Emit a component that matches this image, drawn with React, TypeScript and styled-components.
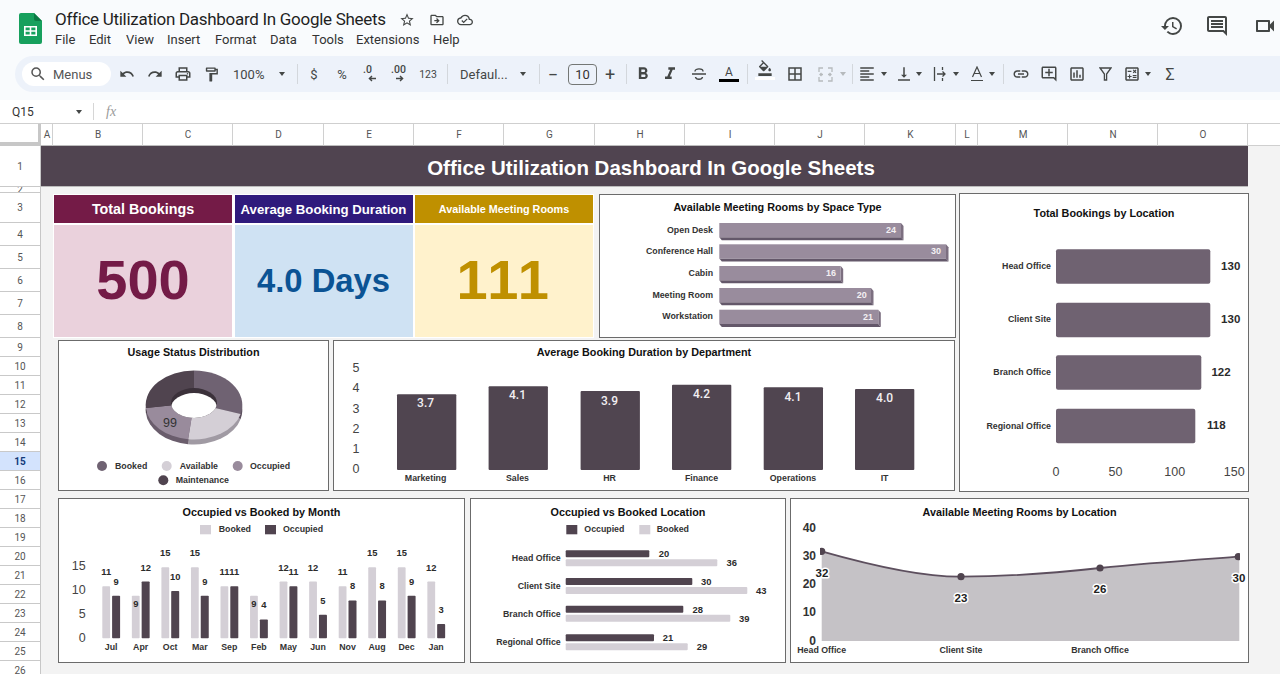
import React from "react";
import styled, { createGlobalStyle } from "styled-components";
import {
  MdBorderAll, MdFormatAlignLeft, MdFormatBold, MdFormatItalic, MdHistory, MdLink,
  MdOutlineAddComment, MdOutlineAssessment, MdOutlineCalculate, MdOutlineCloudDone,
  MdOutlineDriveFileMove, MdOutlineFormatColorFill, MdOutlineFormatPaint, MdOutlineInsertComment,
  MdOutlinePrint, MdOutlineStarBorder, MdOutlineVideocam, MdRedo, MdSearch, MdUndo, MdVerticalAlignBottom,
} from "react-icons/md";

const GlobalStyle = createGlobalStyle`
  html, body { margin: 0; padding: 0; background: #f3f3f3; }
  #root { width: 1280px; height: 674px; overflow: hidden; }
  * { box-sizing: border-box; }
`;

const UI_FONT = `Roboto, "Liberation Sans", sans-serif`;
const CHART_FONT = `"Liberation Sans", Arial, sans-serif`;

const Page = styled.div`
  width: 1280px; height: 674px; overflow: hidden; display: flex; flex-direction: column;
  font-family: ${UI_FONT}; background: #f3f3f3;
`;
const Chrome = styled.header`
  height: 100px; background: #f9fbfd; display: flex; flex-direction: column; flex: none;
`;
const AppBar = styled.div`
  height: 56px; display: flex; align-items: flex-start; padding: 13px 0 0 19px; position: relative;
`;
const LogoBox = styled.svg`
  width: 23px; height: 31px; flex: none;
`;
const TitleColumn = styled.div`
  margin-left: 13px; display: flex; flex-direction: column;
`;
const TitleRow = styled.div`
  height: 13px; display: flex; align-items: center; margin-top: 0;
`;
const DocTitle = styled.div`
  font-size: 17px; letter-spacing: -0.29px; line-height: 13px; color: #1f1f1f; width: 340px; white-space: nowrap;
`;
const TitleIcon = styled.span<{ $w: number }>`
  width: ${(p) => p.$w}px; display: flex; justify-content: center; color: #444746; font-size: 16px;
`;
const MenuRow = styled.nav`
  display: flex; margin-top: 4px; height: 18px; align-items: center;
`;
const MenuItem = styled.span<{ $w: number }>`
  width: ${(p) => p.$w}px; font-size: 13px; color: #333; white-space: nowrap;
`;
const RightIcons = styled.div`
  margin-left: auto; margin-right: -11px; display: flex; height: 26px; color: #444746; font-size: 24px; flex: none;
`;
const RightIcon = styled.span<{ $w: number }>`
  width: ${(p) => p.$w}px; display: flex; justify-content: center; align-items: center; flex: none;
`;
const Toolbar = styled.div`
  height: 36px; margin-left: 15px; background: #edf2fa; border-radius: 18px 0 0 18px;
  display: flex; align-items: center; padding-left: 7px; color: #444746; white-space: nowrap;
`;
const SearchPill = styled.div`
  width: 89px; height: 24px; background: #fff; border-radius: 12px; display: flex; align-items: center;
  padding-left: 7px; font-size: 13px; color: #555; gap: 6px; flex: none; margin-right: 2px;
`;
const Tool = styled.span<{ $w: number; $ml?: number; $muted?: boolean; $size?: number }>`
  width: ${(p) => p.$w}px; margin-left: ${(p) => p.$ml ?? 0}px; flex: none; height: 24px;
  display: flex; align-items: center; justify-content: center; font-size: ${(p) => p.$size ?? 18}px;
  color: ${(p) => (p.$muted ? "#b6babd" : "#444746")};
`;
const TextTool = styled(Tool)`
  font-size: ${(p) => p.$size ?? 13}px;
`;
const Caret = styled.i<{ $muted?: boolean }>`
  width: 0; height: 0; border-left: 3.5px solid transparent; border-right: 3.5px solid transparent;
  border-top: 4px solid ${(p) => (p.$muted ? "#b6babd" : "#444746")}; display: block;
`;
const ToolSep = styled.span<{ $ml?: number }>`
  width: 1px; height: 20px; background: #d3d7dc; margin-left: ${(p) => p.$ml ?? 0}px; flex: none;
`;
const DropTool = styled.span<{ $w: number; $pl: number; $pr: number }>`
  width: ${(p) => p.$w}px; padding: 0 ${(p) => p.$pr}px 0 ${(p) => p.$pl}px; display: flex; align-items: center;
  justify-content: space-between; font-size: 13px; flex: none; color: #444746;
`;
const SizeBox = styled.span`
  width: 29px; height: 21px; margin-left: 2px; border: 1px solid #747775; border-radius: 4px; flex: none;
  display: flex; align-items: center; justify-content: center; font-size: 13px; color: #333;
`;
const ColorA = styled.span`
  display: flex; flex-direction: column; align-items: center; width: 20px; font-size: 12px; line-height: 12px;
  color: #444746;
`;
const ColorBar = styled.span<{ $c: string }>`
  display: block; width: 20px; height: 3px; background: ${(p) => p.$c}; margin-top: 1px;
`;
const FillStack = styled.span`
  display: flex; flex-direction: column; align-items: center; font-size: 16px; height: 24px; margin-top: -4px;
`;
const FormulaBar = styled.div`
  height: 24px; background: #fff; display: flex; align-items: center; flex: none; padding-left: 12px;
  border-bottom: 1px solid #cfcfcf;
`;
const NameBox = styled.span`
  width: 64px; font-size: 12px; color: #333;
`;
const FxSep = styled.span`
  width: 1px; height: 17px; background: #d6d6d6; margin-left: 11px;
`;
const Fx = styled.span`
  font-family: "Liberation Serif", serif; font-style: italic; font-size: 14px; color: #9a9a9a; margin-left: 12px;
`;
const Sheet = styled.div`
  flex: 1; display: flex; flex-direction: column; min-height: 0;
`;
const ColHeaderRow = styled.div`
  display: flex; height: 22px; flex: none; background: #fff;
`;
const Corner = styled.div`
  width: 41px; flex: none; background: #fff; border-right: 3px solid #c7c7c7; border-bottom: 4px solid #c7c7c7;
`;
const ColHead = styled.div<{ $w: number }>`
  width: ${(p) => p.$w}px; flex: none; border-right: 1px solid #d0d0d0; border-bottom: 1px solid #bdbdbd;
  display: flex; align-items: center; justify-content: center; font-size: 10px; color: #555; padding-left: 1px;
`;
const ColFill = styled.div`
  flex: 1; border-bottom: 1px solid #cfcfcf;
`;
const SheetBody = styled.div`
  flex: 1; display: flex; min-height: 0;
`;
const RowHeads = styled.div`
  width: 41px; flex: none; background: #fff; border-right: 1px solid #c7c7c7; overflow: hidden;
`;
const RowHead = styled.div<{ $h: number; $active?: boolean }>`
  height: ${(p) => p.$h}px; overflow: hidden; display: flex; align-items: center; justify-content: center;
  font-size: 10px; border-bottom: 1px solid #c9c9c9;
  color: ${(p) => (p.$active ? "#123a7a" : "#555")};
  font-weight: ${(p) => (p.$active ? 700 : 400)};
  background: ${(p) => (p.$active ? "#d3e3fd" : "#fff")};
`;
const Canvas = styled.main`
  flex: 1; display: flex; flex-direction: column; background: #f3f3f3; font-family: ${CHART_FONT}; min-width: 0;
`;
const Banner = styled.div`
  width: 1207px; height: 41px; flex: none; background: #504450; color: #fff; font-weight: 700; font-size: 20.5px;
  display: flex; align-items: center; justify-content: center; padding: 3px 0 0 13px;
  border-bottom: 1px solid #bbb;
`;
const Upper = styled.section`
  display: flex; padding: 6px 0 0 12px; gap: 3px; flex: none;
`;
const LeftCol = styled.div`
  width: 903px; padding-top: 1px; display: flex; flex-direction: column; gap: 2px;
`;
const TopRow = styled.div`
  display: flex; gap: 5px; height: 144px;
`;
const MiddleRow = styled.div`
  display: flex; gap: 4px; height: 151px; padding-left: 5px;
`;
const Lower = styled.section`
  display: flex; gap: 4px; padding: 6px 0 0 17px; flex: none;
`;
const KpiGrid = styled.div`
  width: 541px; height: 144px; background: #fff; padding: 1px;
  display: grid; grid-template-columns: repeat(3, 178px); grid-template-rows: 28px 112px; gap: 2px 2.5px;
`;
const KpiHead = styled.div<{ $bg: string; $size: number }>`
  background: ${(p) => p.$bg}; color: #fff; font-weight: 700; font-size: ${(p) => p.$size}px;
  display: flex; align-items: center; justify-content: center; white-space: nowrap;
`;
const KpiValue = styled.div<{ $bg: string; $c: string; $size: number; $pb?: number; $ls?: number }>`
  background: ${(p) => p.$bg}; color: ${(p) => p.$c}; font-weight: 700; font-size: ${(p) => p.$size}px;
  padding-bottom: ${(p) => p.$pb ?? 0}px; letter-spacing: ${(p) => p.$ls ?? 0}px;
  display: flex; align-items: center; justify-content: center; white-space: nowrap;
`;
const Card = styled.article<{ $w: number; $h: number; $ml?: number }>`
  width: ${(p) => p.$w}px; height: ${(p) => p.$h}px; background: #fff; border: 1px solid #6b6b6b;
  margin-left: ${(p) => p.$ml ?? 0}px; display: flex; flex-direction: column; flex: none;
`;
const CardTitle = styled.h3<{ $h: number; $pt: number }>`
  height: ${(p) => p.$h}px; padding-top: ${(p) => p.$pt}px; margin: 0; flex: none; font-size: 10.8px; font-weight: 700; color: #111;
  display: flex; align-items: center; justify-content: center; white-space: nowrap;
`;
const Plot = styled.svg`
  display: block; flex: none;
`;
const ChartText = styled.text`
  font-family: ${CHART_FONT}; dominant-baseline: central;
`;
const CatLabel = styled(ChartText)`
  font-size: 8.8px; font-weight: 700; fill: #333;
`;
const AxisLabel = styled(ChartText)`
  font-size: 12.5px; fill: #444;
`;
const BoldAxis = styled(ChartText)`
  font-size: 12px; font-weight: 700; fill: #333;
`;
const ValueLabel = styled(ChartText)<{ $size?: number; $c?: string }>`
  font-size: ${(p) => p.$size ?? 9.4}px; font-weight: 700; fill: ${(p) => p.$c ?? "#2b2b2b"};
`;
const LightValue = styled(ChartText)`
  font-family: Roboto, sans-serif; font-size: 12px; font-weight: 500; fill: #f2eff2;
`;
const HaloLabel = styled(ChartText)`
  font-size: 11.5px; font-weight: 700; fill: #222; stroke: #fff; stroke-width: 3px; paint-order: stroke; stroke-linejoin: round;
`;
const SliceLabel = styled(ChartText)`
  font-size: 12.5px; fill: #333;
`;

function ChartCard(props: { x: number; y: number; w: number; h: number; titleH: number; titlePad?: number; ml?: number; title: string; children: React.ReactNode }) {
  const { x, y, w, h, titleH, titlePad = 0, ml, title, children } = props;
  const iw = w - 2;
  const ih = h - 2 - titleH;
  return (
    <Card $w={w} $h={h} $ml={ml}>
      <CardTitle $h={titleH} $pt={titlePad}>{title}</CardTitle>
      <Plot width={iw} height={ih} viewBox={`${x + 1} ${y + 1 + titleH} ${iw} ${ih}`}>{children}</Plot>
    </Card>
  );
}

const COLS: [string, number][] = [["A", 12], ["B", 90], ["C", 90], ["D", 91], ["E", 90], ["F", 90], ["G", 91], ["H", 90], ["I", 90], ["J", 90], ["K", 91], ["L", 22], ["M", 90], ["N", 90], ["O", 90]];
const ROWS: [string, number][] = [["1", 41], ["2", 6], ["3", 30], ["4", 23], ["5", 23], ["6", 23], ["7", 23], ["8", 23], ...Array.from({ length: 18 }, (_, i): [string, number] => [String(i + 9), 19])];

const SPACE = [
  { n: "Open Desk", y: 223, end: 901, v: 24, vx: 896 },
  { n: "Conference Hall", y: 244.3, end: 946, v: 30, vx: 941 },
  { n: "Cabin", y: 266, end: 840.7, v: 16, vx: 836 },
  { n: "Meeting Room", y: 288, end: 871, v: 20, vx: 866.7 },
  { n: "Workstation", y: 309.7, end: 878.3, v: 21, vx: 873 },
];
const DEPTS = [
  { n: "Marketing", x: 397, top: 394.3, v: "3.7", ly: 403, c: 425.6 },
  { n: "Sales", x: 488.6, top: 386.3, v: "4.1", ly: 395, c: 517.5 },
  { n: "HR", x: 580.6, top: 391, v: "3.9", ly: 400.7, c: 609.5 },
  { n: "Finance", x: 672, top: 384.7, v: "4.2", ly: 394.3, c: 701.5 },
  { n: "Operations", x: 763.7, top: 387.3, v: "4.1", ly: 396.7, c: 793 },
  { n: "IT", x: 855, top: 389, v: "4.0", ly: 398.3, c: 884.6 },
];
const TOTALS = [
  { n: "Head Office", y: 249.3, end: 1210.3, v: 130, vx: 1230.7, c: 266 },
  { n: "Client Site", y: 302.7, end: 1210.3, v: 130, vx: 1230.7, c: 319 },
  { n: "Branch Office", y: 355.3, end: 1201.3, v: 122, vx: 1221, c: 372.3 },
  { n: "Regional Office", y: 408.7, end: 1195.3, v: 118, vx: 1216.3, c: 425.6 },
];
const MONTHS: [string, number, number][] = [["Jul", 11, 9], ["Apr", 9, 12], ["Oct", 15, 10], ["Mar", 15, 9], ["Sep", 11, 11], ["Feb", 9, 4], ["May", 12, 11], ["Jun", 12, 5], ["Nov", 11, 8], ["Aug", 15, 8], ["Dec", 15, 9], ["Jan", 12, 3]];
const LOCS = [
  { n: "Head Office", ly: 558, y1: 550.3, e1: 649.3, v1: 20, x1: 664, t1: 553.3, y2: 559.3, e2: 717.3, v2: 36, x2: 731.7, t2: 562.3 },
  { n: "Client Site", ly: 585.7, y1: 578, e1: 692.3, v1: 30, x1: 706.3, t1: 581.3, y2: 587, e2: 747.3, v2: 43, x2: 761.3, t2: 590 },
  { n: "Branch Office", ly: 613.7, y1: 605.7, e1: 683.3, v1: 28, x1: 697.7, t1: 609, y2: 614.7, e2: 730.3, v2: 39, x2: 744.3, t2: 618 },
  { n: "Regional Office", ly: 641.7, y1: 634.3, e1: 654, v1: 21, x1: 668, t1: 637.7, y2: 643.3, e2: 687.7, v2: 29, x2: 702, t2: 646.7 },
];
const DONUT = [
  { from: 0, to: 105, top: "#6f6272", side: "#5c4f5e" },
  { from: 105, to: 187, top: "#d4cfd6", side: "#a09aa3" },
  { from: 187, to: 265, top: "#998b9c", side: "#6a5d6c" },
  { from: 265, to: 360, top: "#50444f", side: "#3f353e" },
];
function sector(from: number, to: number, dy: number) {
  const cx = 194, cy = 405 + dy, rx = 48.3, ry = 34.5;
  const pt = (a: number) => {
    const r = (a * Math.PI) / 180;
    return `${(cx + rx * Math.sin(r)).toFixed(2)} ${(cy - ry * Math.cos(r)).toFixed(2)}`;
  };
  return `M${cx} ${cy - 2}L${pt(from)}A${rx} ${ry} 0 ${to - from > 180 ? 1 : 0} 1 ${pt(to)}Z`;
}

function Logo() {
  return (
    <LogoBox viewBox="0 0 23 31">
      <path d="M2 0H15L23 8V29a2 2 0 0 1-2 2H2a2 2 0 0 1-2-2V2a2 2 0 0 1 2-2Z" fill="#17a05d" />
      <path d="M15 0L23 8H17a2 2 0 0 1-2-2Z" fill="#0c7a45" />
      <path d="M5 13H18V23H5ZM6.6 14.6V17.2H10.7V14.6ZM12.3 14.6V17.2H16.4V14.6ZM6.6 18.8V21.4H10.7V18.8ZM12.3 18.8V21.4H16.4V18.8Z" fill="#fff" fillRule="evenodd" />
    </LogoBox>
  );
}

function IncDec({ label, x, flip }: { label: string; x: number; flip?: boolean }) {
  return (
    <svg width="24" height="22" viewBox="0 0 24 22">
      <text x={x} y="10" fontFamily="Roboto, sans-serif" fontSize="10.5" fontWeight="500" fill="#444746">{label}</text>
      {flip ? (
        <path d="M9 15.5h6M13 13l2.6 2.5L13 18" fill="none" stroke="#444746" strokeWidth="1.4" />
      ) : (
        <path d="M19 15.5h-6M15 13l-2.6 2.5L15 18" fill="none" stroke="#444746" strokeWidth="1.4" />
      )}
    </svg>
  );
}

export default function App() {
  return (
    <Page>
      <GlobalStyle />
      <Chrome>
        <AppBar>
          <Logo />
          <TitleColumn>
            <TitleRow>
              <DocTitle>Office Utilization Dashboard In Google Sheets</DocTitle>
              <TitleIcon $w={24}><MdOutlineStarBorder /></TitleIcon>
              <TitleIcon $w={35}><MdOutlineDriveFileMove /></TitleIcon>
              <TitleIcon $w={22}><MdOutlineCloudDone /></TitleIcon>
            </TitleRow>
            <MenuRow>
              <MenuItem $w={34}>File</MenuItem>
              <MenuItem $w={37}>Edit</MenuItem>
              <MenuItem $w={41}>View</MenuItem>
              <MenuItem $w={48}>Insert</MenuItem>
              <MenuItem $w={55}>Format</MenuItem>
              <MenuItem $w={42}>Data</MenuItem>
              <MenuItem $w={44}>Tools</MenuItem>
              <MenuItem $w={77}>Extensions</MenuItem>
              <MenuItem $w={40}>Help</MenuItem>
            </MenuRow>
          </TitleColumn>
          <RightIcons>
            <RightIcon $w={44}><MdHistory /></RightIcon>
            <RightIcon $w={45}><MdOutlineInsertComment /></RightIcon>
            <RightIcon $w={52}><MdOutlineVideocam /></RightIcon>
          </RightIcons>
        </AppBar>
        <Toolbar>
          <SearchPill><MdSearch size={18} />Menus</SearchPill>
          <Tool $w={28} $size={16}><MdUndo /></Tool>
          <Tool $w={27} $size={16}><MdRedo /></Tool>
          <Tool $w={29}><MdOutlinePrint /></Tool>
          <Tool $w={28} $size={17}><MdOutlineFormatPaint /></Tool>
          <DropTool $w={72} $pl={8} $pr={12}>100%<Caret /></DropTool>
          <ToolSep />
          <TextTool $w={32}>$</TextTool>
          <TextTool $w={24}>%</TextTool>
          <Tool $w={30}><IncDec label=".0" x={6} /></Tool>
          <Tool $w={30}><IncDec label=".00" x={4} flip /></Tool>
          <TextTool $w={28} $size={10.5}>123</TextTool>
          <ToolSep $ml={5} />
          <DropTool $w={91} $pl={12} $pr={13}>Defaul...<Caret /></DropTool>
          <ToolSep />
          <TextTool $w={26} $size={18}>−</TextTool>
          <SizeBox>10</SizeBox>
          <TextTool $w={26} $size={18}>+</TextTool>
          <ToolSep $ml={3} />
          <Tool $w={32} $size={20}><MdFormatBold /></Tool>
          <Tool $w={22} $size={20}><MdFormatItalic /></Tool>
          <Tool $w={36}>
            <svg width="16" height="16" viewBox="0 0 16 16" fill="none" stroke="#444746" strokeWidth="1.4">
              <path d="M1 8h14M4 5.5C4 2 12 2 12 5.5M4.5 11C5 14 11 14 11.5 11" />
            </svg>
          </Tool>
          <Tool $w={24}><ColorA>A<ColorBar $c="#000" /></ColorA></Tool>
          <ToolSep $ml={6} />
          <Tool $w={34}><FillStack><MdOutlineFormatColorFill /><ColorBar $c="#fff" /></FillStack></Tool>
          <Tool $w={25}><MdBorderAll /></Tool>
          <Tool $w={28} $ml={4} $muted>
            <svg width="15" height="15" viewBox="0 0 15 15" fill="none" stroke="#b6babd" strokeWidth="1.3">
              <path d="M1 5V1h4M10 1h4v4M1 10v4h4M10 14h4v-4M5 7.5H2M10 7.5h3M3.5 6l-1.5 1.5L3.5 9M11.5 6L13 7.5 11.5 9" />
            </svg>
          </Tool>
          <Tool $w={8}><Caret $muted /></Tool>
          <ToolSep $ml={5} />
          <Tool $w={28}><MdFormatAlignLeft /></Tool>
          <Tool $w={6}><Caret /></Tool>
          <Tool $w={22} $ml={6}><MdVerticalAlignBottom /></Tool>
          <Tool $w={8}><Caret /></Tool>
          <Tool $w={22} $ml={6}>
            <svg width="14" height="16" viewBox="0 0 14 16" fill="none" stroke="#444746" strokeWidth="1.3">
              <path d="M1.5 1v14M9.5 1v3M9.5 12v3M4 8h8M9.5 5.5L12 8l-2.5 2.5" />
            </svg>
          </Tool>
          <Tool $w={8} $ml={1}><Caret /></Tool>
          <Tool $w={23} $ml={5}>
            <svg width="14" height="16" viewBox="0 0 14 16" fill="none" stroke="#444746" strokeWidth="1.2">
              <path d="M2.5 11L7 1l4.5 10M4.2 7.5h5.6M1 14.5h12" />
            </svg>
          </Tool>
          <Tool $w={8}><Caret /></Tool>
          <ToolSep $ml={7} />
          <Tool $w={33}><MdLink /></Tool>
          <Tool $w={24}><MdOutlineAddComment /></Tool>
          <Tool $w={31}><MdOutlineAssessment /></Tool>
          <Tool $w={27}>
            <svg width="13" height="14" viewBox="0 0 13 14" fill="none" stroke="#444746" strokeWidth="1.3">
              <path d="M1 1h11L7.6 7v6H5.4V7Z" />
            </svg>
          </Tool>
          <Tool $w={26}><MdOutlineCalculate /></Tool>
          <Tool $w={6}><Caret /></Tool>
          <TextTool $w={38} $size={16}>Σ</TextTool>
        </Toolbar>
      </Chrome>
      <FormulaBar>
        <NameBox>Q15</NameBox>
        <Caret />
        <FxSep />
        <Fx>fx</Fx>
      </FormulaBar>
      <Sheet>
        <ColHeaderRow>
          <Corner />
          {COLS.map(([l, w]) => <ColHead key={l} $w={w}>{l}</ColHead>)}
          <ColFill />
        </ColHeaderRow>
        <SheetBody>
          <RowHeads>
            {ROWS.map(([l, h]) => <RowHead key={l} $h={h} $active={l === "15"}>{l}</RowHead>)}
          </RowHeads>
          <Canvas>
            <Banner>Office Utilization Dashboard In Google Sheets</Banner>
            <Upper>
              <LeftCol>
                <TopRow>
                  <KpiGrid>
                    <KpiHead $bg="#741b47" $size={14.3}>Total Bookings</KpiHead>
                    <KpiHead $bg="#2f1a7c" $size={13.2}>Average Booking Duration</KpiHead>
                    <KpiHead $bg="#bf9000" $size={10.8}>Available Meeting Rooms</KpiHead>
                    <KpiValue $bg="#ead1dc" $c="#741b47" $size={56} $pb={3}>500</KpiValue>
                    <KpiValue $bg="#cfe2f3" $c="#0b5394" $size={32.8}>4.0 Days</KpiValue>
                    <KpiValue $bg="#fff2cc" $c="#bf9000" $size={56} $pb={3} $ls={2.5}>111</KpiValue>
                  </KpiGrid>
                  <ChartCard x={599} y={194} w={357} h={144} titleH={23} title="Available Meeting Rooms by Space Type">
                    {SPACE.map((s) => (
                      <g key={s.n}>
                        <path d={`M719.3 ${s.y + 14.3}l2.5 3H${s.end + 2.5}l-2.5-3Z`} fill="#64586a" />
                        <path d={`M${s.end} ${s.y}l2.5 3v14.3l-2.5-3Z`} fill="#7c6f80" />
                        <rect x={719.3} y={s.y} width={s.end - 719.3} height={14.3} fill="#998c9d" />
                        <CatLabel x={713} y={s.y + 6.5} textAnchor="end">{s.n}</CatLabel>
                        <ValueLabel x={s.vx} y={s.y + 7} textAnchor="end" $c="#f3f0f3" $size={9}>{s.v}</ValueLabel>
                      </g>
                    ))}
                  </ChartCard>
                </TopRow>
                <MiddleRow>
                  <ChartCard x={58} y={340} w={271} h={151} titleH={22} title="Usage Status Distribution">
                    <defs>
                      <clipPath id="hole"><ellipse cx={194} cy={403} rx={23} ry={15} /></clipPath>
                    </defs>
                    {DONUT.map((d) => <path key={"s" + d.from} d={sector(d.from, d.to, 5)} fill={d.side} />)}
                    {DONUT.map((d) => <path key={"t" + d.from} d={sector(d.from, d.to, 0)} fill={d.top} />)}
                    <ellipse cx={194} cy={403} rx={23} ry={15} fill="#3b313a" />
                    <ellipse cx={194} cy={408} rx={23} ry={15} fill="#fff" clipPath="url(#hole)" />
                    <SliceLabel x={170} y={422.7} textAnchor="middle">99</SliceLabel>
                    <circle cx={102} cy={466} r={5} fill="#6f6272" />
                    <CatLabel x={115} y={466}>Booked</CatLabel>
                    <circle cx={166.7} cy={466} r={5} fill="#d4cfd6" />
                    <CatLabel x={179.7} y={466}>Available</CatLabel>
                    <circle cx={237.7} cy={466} r={5} fill="#998b9c" />
                    <CatLabel x={250} y={466}>Occupied</CatLabel>
                    <circle cx={163.3} cy={480.3} r={5} fill="#50444f" />
                    <CatLabel x={175.7} y={480.3}>Maintenance</CatLabel>
                  </ChartCard>
                  <ChartCard x={333} y={340} w={622} h={151} titleH={18} titlePad={4} title="Average Booking Duration by Department">
                    {[5, 4, 3, 2, 1, 0].map((t, i) => (
                      <AxisLabel key={t} x={356} y={368.3 + i * 20.15} textAnchor="middle">{t}</AxisLabel>
                    ))}
                    {DEPTS.map((d) => (
                      <g key={d.n}>
                        <rect x={d.x} y={d.top} width={59.3} height={470 - d.top} rx={1} fill="#504550" />
                        <LightValue x={d.c} y={d.ly} textAnchor="middle">{d.v}</LightValue>
                        <CatLabel x={d.c} y={478} textAnchor="middle">{d.n}</CatLabel>
                      </g>
                    ))}
                  </ChartCard>
                </MiddleRow>
              </LeftCol>
              <ChartCard x={959} y={193} w={290} h={299} titleH={38} title="Total Bookings by Location">
                {TOTALS.map((t) => (
                  <g key={t.n}>
                    <rect x={1056} y={t.y} width={t.end - 1056} height={34.5} rx={2} fill="#6f6271" />
                    <CatLabel x={1051} y={t.c} textAnchor="end">{t.n}</CatLabel>
                    <ValueLabel x={t.vx} y={t.c - 0.5} textAnchor="middle" $size={11.5}>{t.v}</ValueLabel>
                  </g>
                ))}
                {[0, 50, 100, 150].map((t, i) => (
                  <AxisLabel key={t} x={1056 + i * 59.4} y={471.7} textAnchor="middle">{t}</AxisLabel>
                ))}
              </ChartCard>
            </Upper>
            <Lower>
              <ChartCard x={58} y={498} w={407} h={165} titleH={26} title="Occupied vs Booked by Month">
                <rect x={200} y={523.3} width={11} height={11} fill="#d4cfd6" />
                <CatLabel x={218.7} y={528.7}>Booked</CatLabel>
                <rect x={265} y={523.3} width={11} height={11} fill="#50444f" />
                <CatLabel x={283} y={528.7}>Occupied</CatLabel>
                {[15, 10, 5, 0].map((t, i) => (
                  <AxisLabel key={t} x={85.7} y={566 + i * 23.9} textAnchor="end">{t}</AxisLabel>
                ))}
                {MONTHS.map(([m, b, o], i) => {
                  const x = 102.3 + i * 29.55;
                  const u = 4.73;
                  const bt = 638.3 - b * u;
                  const ot = 638.3 - o * u;
                  const inside = b === 9;
                  return (
                    <g key={m}>
                      <rect x={x} y={bt} width={7.8} height={b * u} rx={0.8} fill="#d4cfd6" />
                      <rect x={x + 9.8} y={ot} width={8} height={o * u} rx={0.8} fill="#50444f" />
                      <ValueLabel x={x + 3.9} y={inside ? bt + 7.6 : bt - 14.5} textAnchor="middle">{b}</ValueLabel>
                      <ValueLabel x={x + 13.8} y={ot - 14.5} textAnchor="middle">{o}</ValueLabel>
                      <CatLabel x={x + 8.8} y={647.3} textAnchor="middle">{m}</CatLabel>
                    </g>
                  );
                })}
              </ChartCard>
              <ChartCard x={470} y={498} w={316} h={165} titleH={26} ml={1} title="Occupied vs Booked Location">
                <rect x={566.3} y={523.3} width={11} height={11} fill="#50444f" />
                <CatLabel x={584.3} y={528.7}>Occupied</CatLabel>
                <rect x={639.3} y={523.3} width={11} height={11} fill="#d4cfd6" />
                <CatLabel x={656.7} y={528.7}>Booked</CatLabel>
                {LOCS.map((l) => (
                  <g key={l.n}>
                    <CatLabel x={560.7} y={l.ly} textAnchor="end">{l.n}</CatLabel>
                    <rect x={565.7} y={l.y1} width={l.e1 - 565.7} height={7} rx={1} fill="#50444f" />
                    <rect x={565.7} y={l.y2} width={l.e2 - 565.7} height={7} rx={1} fill="#d4cfd6" />
                    <ValueLabel x={l.x1} y={l.t1} textAnchor="middle">{l.v1}</ValueLabel>
                    <ValueLabel x={l.x2} y={l.t2} textAnchor="middle">{l.v2}</ValueLabel>
                  </g>
                ))}
              </ChartCard>
              <ChartCard x={790} y={498} w={459} h={165} titleH={20} titlePad={6} title="Available Meeting Rooms by Location">
                <defs>
                  <clipPath id="plot"><rect x={820} y={525} width={420} height={120} /></clipPath>
                </defs>
                {[40, 30, 20, 10, 0].map((t, i) => (
                  <BoldAxis key={t} x={816} y={527.7 + i * 28.25} textAnchor="end">{t}</BoldAxis>
                ))}
                <path d="M821.7 551.3C870 565 920 577 961 576.7C1005 576.5 1055 573 1100 568C1150 563 1195 560 1239.3 556.7V641H821.7Z" fill="#c5c2c6" />
                <path d="M821.7 551.3C870 565 920 577 961 576.7C1005 576.5 1055 573 1100 568C1150 563 1195 560 1239.3 556.7" fill="none" stroke="#5d4f5e" strokeWidth={1.8} />
                <g clipPath="url(#plot)" fill="#50444f">
                  <circle cx={821.7} cy={551.3} r={3.6} />
                  <circle cx={961} cy={576.7} r={3.6} />
                  <circle cx={1100} cy={568} r={3.6} />
                  <circle cx={1238.3} cy={556.7} r={3.6} />
                </g>
                <HaloLabel x={822} y={572.7} textAnchor="middle">32</HaloLabel>
                <HaloLabel x={961} y={598} textAnchor="middle">23</HaloLabel>
                <HaloLabel x={1100} y={589.3} textAnchor="middle">26</HaloLabel>
                <HaloLabel x={1239} y={578} textAnchor="middle">30</HaloLabel>
                <CatLabel x={821.7} y={649.7} textAnchor="middle">Head Office</CatLabel>
                <CatLabel x={961} y={649.7} textAnchor="middle">Client Site</CatLabel>
                <CatLabel x={1100} y={649.7} textAnchor="middle">Branch Office</CatLabel>
              </ChartCard>
            </Lower>
          </Canvas>
        </SheetBody>
      </Sheet>
    </Page>
  );
}
